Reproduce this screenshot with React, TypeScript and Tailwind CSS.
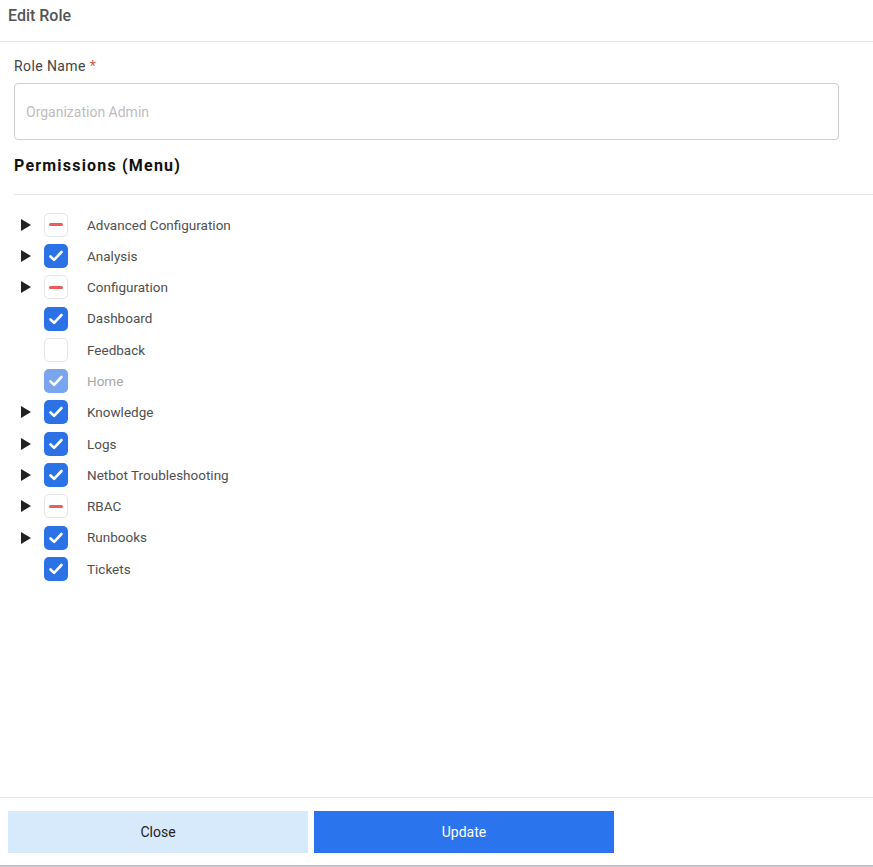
import { useState } from "react";

type Perm = {
  name: string;
  state: "checked" | "partial" | "none";
  expandable: boolean;
  disabled?: boolean;
};

const perms: Perm[] = [
  { name: "Advanced Configuration", state: "partial", expandable: true },
  { name: "Analysis", state: "checked", expandable: true },
  { name: "Configuration", state: "partial", expandable: true },
  { name: "Dashboard", state: "checked", expandable: false },
  { name: "Feedback", state: "none", expandable: false },
  { name: "Home", state: "checked", expandable: false, disabled: true },
  { name: "Knowledge", state: "checked", expandable: true },
  { name: "Logs", state: "checked", expandable: true },
  { name: "Netbot Troubleshooting", state: "checked", expandable: true },
  { name: "RBAC", state: "partial", expandable: true },
  { name: "Runbooks", state: "checked", expandable: true },
  { name: "Tickets", state: "checked", expandable: false },
];

function Box({ state, disabled }: { state: Perm["state"]; disabled?: boolean }) {
  if (state === "checked") {
    return (
      <div
        className={`w-6 h-6 rounded-[5px] flex items-center justify-center ${
          disabled ? "bg-[#79a5ee]" : "bg-[#2b72e6]"
        }`}
      >
        <svg width="18" height="18" viewBox="0 0 18 18" fill="none">
          <path d="M3.5 9.5l3.6 3.4L14.5 5" stroke="white" strokeWidth="2.6" strokeLinecap="round" strokeLinejoin="round" />
        </svg>
      </div>
    );
  }
  return (
    <div className="w-6 h-6 rounded-[5px] border border-[#e6e6e6] bg-white flex items-center justify-center">
      {state === "partial" && <div className="w-[14px] h-[3px] rounded-sm bg-[#ef5a5a]" />}
    </div>
  );
}

export default function App() {
  const [name, setName] = useState("");

  return (
    <div className="h-[867px] flex flex-col bg-white font-['Roboto',sans-serif]">
      <div className="h-[42px] border-b border-[#e8e8e8] px-2 pt-[4px] text-[16px] font-medium text-[#545454]">
        Edit Role
      </div>

      <div className="flex-1 pl-[14px]">
        <div className="pt-[14px] text-[14px] text-[#444] tracking-[0.4px] leading-5">
          Role Name <span className="text-[#d9534f]">*</span>
        </div>
        <input
          value={name}
          onChange={(e) => setName(e.target.value)}
          placeholder="Organization Admin"
          className="mt-[7px] w-[825px] h-[57px] border border-[#cfcfcf] rounded-[4px] px-[11px] text-[14px] text-[#333] placeholder:text-[#bdbdbd] outline-none"
        />
        <div className="mt-[16px] text-[16px] font-bold text-[#111] tracking-[1.2px] leading-5">
          Permissions (Menu)
        </div>
        <div className="mt-[18px] border-t border-[#e6e6e6]" />

        <div className="pt-[14px] flex flex-col">
          {perms.map((p) => (
            <div key={p.name} className="h-[31.3px] flex items-center">
              <div className="w-[30px] flex justify-start pl-[7px]">
                {p.expandable && (
                  <svg width="10" height="12" viewBox="0 0 10 12">
                    <path d="M0 0L10 6L0 12Z" fill="#222" />
                  </svg>
                )}
              </div>
              <Box state={p.state} disabled={p.disabled} />
              <div className={`ml-[19px] text-[13.5px] ${p.disabled ? "text-[#a8a8a8]" : "text-[#505050]"}`}>
                {p.name}
              </div>
            </div>
          ))}
        </div>
      </div>

      <div className="border-t border-[#e8e8e8] pt-[13px] pb-[12px] px-2 flex gap-[6px] border-b-2 border-b-[#c4c4c8]">
        <button className="w-[300px] h-[42px] bg-[#d6eafb] text-[14px] text-[#222]">Close</button>
        <button className="w-[300px] h-[42px] bg-[#2a74ee] text-[14px] text-white">Update</button>
      </div>
    </div>
  );
}
